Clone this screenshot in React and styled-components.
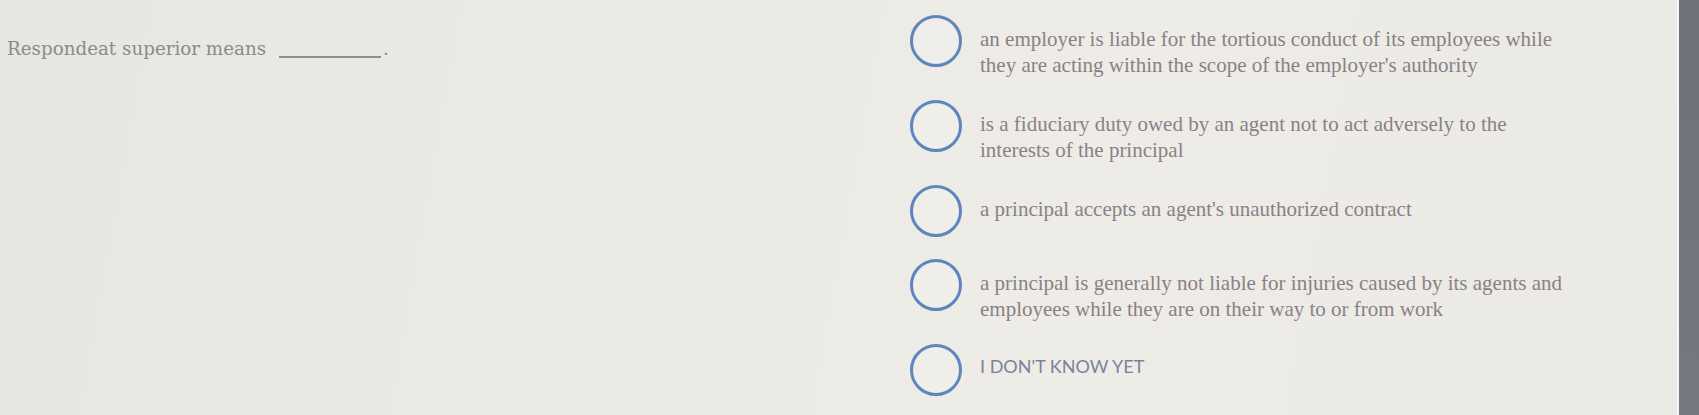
import React from "react";
import styled, { createGlobalStyle } from "styled-components";

const Global = createGlobalStyle`
  html, body { margin: 0; padding: 0; }
  body { background: #e9e8e4; }
`;

const Screen = styled.div`
  display: flex;
  width: 1699px;
  height: 415px;
  overflow: hidden;
  background: linear-gradient(100deg, #e6e6e3 0%, #ebeae6 35%, #eeece7 65%, #ebe9e3 100%);
`;

const Content = styled.main`
  flex: 1;
  display: flex;
  padding: 15px 0 0 7px;
  box-sizing: border-box;
`;

const Edge = styled.div`
  width: 20px;
  flex: none;
  background: linear-gradient(180deg, #6c717a 0%, #737881 100%);
  border-left: 2px solid #f4f4f6;
`;

const QuestionCol = styled.div`
  width: 903px;
  flex: none;
  padding-top: 22px;
`;

const Question = styled.p`
  margin: 0;
  font-family: "DejaVu Serif", "Liberation Serif", serif;
  font-size: 18.3px;
  line-height: 24px;
  color: #8c8a8a;
`;

const Blank = styled.span`
  display: inline-block;
  width: 102px;
  height: 2px;
  margin: 0 2px 0 13px;
  background: #8f8f8f;
  vertical-align: -3px;
`;

const Options = styled.ul`
  list-style: none;
  margin: 0;
  padding: 0;
  display: flex;
  flex-direction: column;
  gap: 22px;
`;

const Option = styled.li`
  display: flex;
  align-items: flex-start;
  gap: 18px;
`;

const Radio = styled.span`
  flex: none;
  width: 52px;
  height: 52px;
  box-sizing: border-box;
  border-radius: 50%;
  border: 3px solid #5f86ba;
  background: rgba(255, 255, 255, 0.15);
`;

const Label = styled.span`
  width: 595px;
  padding-top: ${(p) => (p.$sans ? "9px" : "11px")};
  font-family: ${(p) =>
    p.$sans ? '"Lato", "Open Sans", sans-serif' : '"Liberation Serif", serif'};
  font-size: ${(p) => (p.$sans ? "18px" : "21px")};
  line-height: 26px;
  color: ${(p) => (p.$sans ? "#7d829c" : "#8a8187")};
`;

const answers = [
  { text: "an employer is liable for the tortious conduct of its employees while they are acting within the scope of the employer's authority" },
  { text: "is a fiduciary duty owed by an agent not to act adversely to the interests of the principal" },
  { text: "a principal accepts an agent's unauthorized contract" },
  { text: "a principal is generally not liable for injuries caused by its agents and employees while they are on their way to or from work" },
  { text: "I DON'T KNOW YET", sans: true },
];

export default function App() {
  return (
    <>
      <Global />
      <Screen>
        <Content>
          <QuestionCol>
            <Question>
              Respondeat superior means<Blank />.
            </Question>
          </QuestionCol>
          <Options>
            {answers.map((a) => (
              <Option key={a.text}>
                <Radio />
                <Label $sans={a.sans}>{a.text}</Label>
              </Option>
            ))}
          </Options>
        </Content>
        <Edge />
      </Screen>
    </>
  );
}
